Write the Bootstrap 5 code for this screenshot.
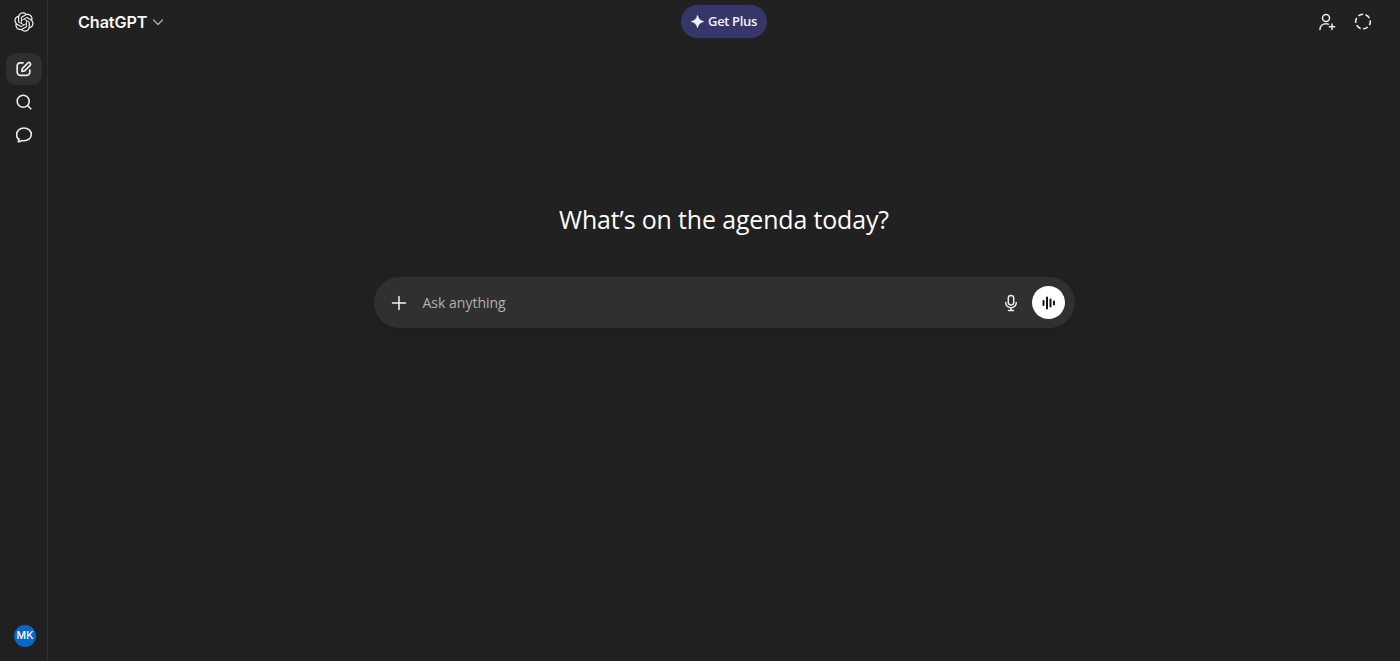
<!DOCTYPE html>
<html lang="en" data-bs-theme="dark">
<head>
<meta charset="utf-8">
<title>ChatGPT</title>
<link href="https://cdn.jsdelivr.net/npm/bootstrap@5.3.0/dist/css/bootstrap.min.css" rel="stylesheet">
<style>
html,body{height:100%;margin:0;overflow:hidden}
body{background:#212121;color:#fff;font-family:"Open Sans","Noto Sans",sans-serif}
.app-shell{height:661px}
.side-rail{width:48px;background:#202020;border-right:1px solid #2e2e2e;flex:none}
.rail-logo{height:44px}
.rail-item{width:36px;height:32px;border-radius:10px;color:#ececec}
.rail-item.is-active{background:#2f2f2f}
.rail-list{padding:9px 0 0 6px;gap:1px}
.avatar-dot{width:22px;height:22px;border-radius:50%;background:#0a66c8;color:#fff;font:500 10.5px/22px "Inter",sans-serif;text-align:center;margin:0 0 14px 14px}
.main-pane{min-width:0}
.top-strip{height:44px;padding:0 27px 0 30px}
.model-name{font:600 16.2px/1 "Inter",sans-serif;letter-spacing:-.1px;color:#f6f6f6}
.chevron-mark{margin-left:5px}
.plus-pill{position:absolute;left:633px;top:5px;width:86px;height:33px;border-radius:17px;background:#373669;color:#f3f3ff;font:600 13px/33px "Open Sans",sans-serif;letter-spacing:-.35px}
.hero-zone{padding-top:155px}
.hero-title{font:400 24.9px/40px "Open Sans",sans-serif;letter-spacing:-.12px;color:#fff;margin:0 0 38px}
.composer-box{width:701px;height:51px;border-radius:26px;background:#303030;box-shadow:0 4px 20px rgba(0,0,0,.08);padding:0 10px 0 16px}
.composer-text{font:400 14px/1 "Open Sans",sans-serif;color:#b0b0b0;margin-left:15px;padding-top:1px}
.voice-btn{width:33px;height:33px;border-radius:50%;background:#fff;margin-left:12px}
.top-icons{gap:16px}
</style>
</head>
<body>
<div class="app-shell d-flex">
  <aside class="side-rail d-flex flex-column">
    <div class="rail-logo d-flex align-items-center justify-content-center">
      <svg width="20" height="20" viewBox="0 0 41 41" fill="#ececec"><path d="M37.5324 16.8707C37.9808 15.5241 38.1363 14.0974 37.9886 12.6859C37.8409 11.2744 37.3934 9.91076 36.676 8.68622C35.6126 6.83404 33.9882 5.3676 32.0373 4.4985C30.0864 3.62941 27.9098 3.40259 25.8215 3.85078C24.8796 2.7893 23.7219 1.94125 22.4257 1.36341C21.1295 0.785575 19.7249 0.491269 18.3058 0.500197C16.1708 0.495044 14.0893 1.16803 12.3614 2.42214C10.6335 3.67624 9.34853 5.44666 8.6917 7.47815C7.30085 7.76286 5.98686 8.3414 4.8377 9.17505C3.68854 10.0087 2.73073 11.0782 2.02839 12.312C0.956464 14.1591 0.498905 16.2988 0.721698 18.4228C0.944492 20.5467 1.83612 22.5449 3.268 24.1293C2.81966 25.4759 2.66413 26.9026 2.81182 28.3141C2.95951 29.7256 3.40701 31.0892 4.12437 32.3138C5.18791 34.1659 6.8123 35.6322 8.76321 36.5013C10.7141 37.3704 12.8907 37.5973 14.9789 37.1492C15.9208 38.2107 17.0786 39.0587 18.3747 39.6366C19.6709 40.2144 21.0755 40.5087 22.4946 40.4998C24.6307 40.5054 26.7133 39.8321 28.4418 38.5772C30.1704 37.3223 31.4556 35.5506 32.1119 33.5179C33.5027 33.2332 34.8167 32.6547 35.9659 31.821C37.115 30.9874 38.0728 29.9178 38.7752 28.684C39.8458 26.8371 40.3023 24.6979 40.0789 22.5748C39.8556 20.4517 38.9639 18.4544 37.5324 16.8707ZM22.4978 37.8849C20.7443 37.8874 19.0459 37.2733 17.6994 36.1501C17.7601 36.117 17.8666 36.0586 17.936 36.0161L25.9004 31.4156C26.1003 31.3019 26.2663 31.137 26.3813 30.9378C26.4964 30.7386 26.5563 30.5124 26.5549 30.2825V19.0542L29.9213 20.998C29.9389 21.0068 29.9541 21.0198 29.9656 21.0359C29.977 21.052 29.9842 21.0707 29.9867 21.0902V30.3889C29.9842 32.375 29.1946 34.2791 27.7909 35.6841C26.3872 37.0892 24.4838 37.8806 22.4978 37.8849ZM6.39227 31.0064C5.51397 29.4888 5.19742 27.7107 5.49804 25.9832C5.55718 26.0187 5.66048 26.0818 5.73461 26.1244L13.699 30.7248C13.8975 30.8408 14.1233 30.902 14.3532 30.902C14.583 30.902 14.8088 30.8408 15.0073 30.7248L24.731 25.1103V28.9979C24.7321 29.0177 24.7283 29.0376 24.7199 29.0556C24.7115 29.0736 24.6988 29.0893 24.6829 29.1012L16.6317 33.7497C14.9096 34.7416 12.8643 35.0097 10.9447 34.4954C9.02506 33.9811 7.38785 32.7263 6.39227 31.0064ZM4.29707 13.6194C5.17156 12.0998 6.55279 10.9364 8.19885 10.3327C8.19885 10.4013 8.19491 10.5228 8.19491 10.6071V19.808C8.19351 20.0378 8.25334 20.2638 8.36823 20.4629C8.48312 20.6619 8.64893 20.8267 8.84863 20.9404L18.5723 26.5542L15.206 28.4979C15.1894 28.5089 15.1703 28.5155 15.1505 28.5173C15.1307 28.5191 15.1107 28.516 15.0924 28.5082L7.04046 23.8557C5.32135 22.8601 4.06716 21.2235 3.55289 19.3046C3.03862 17.3858 3.30624 15.3413 4.29707 13.6194ZM31.955 20.0556L22.2312 14.4411L25.5976 12.4981C25.6142 12.4872 25.6333 12.4805 25.6531 12.4787C25.6729 12.4769 25.6928 12.4801 25.7111 12.4879L33.7631 17.1364C34.9967 17.849 36.0017 18.8982 36.6606 20.1613C37.3194 21.4244 37.6047 22.849 37.4832 24.2684C37.3617 25.6878 36.8382 27.0432 35.9743 28.1759C35.1103 29.3086 33.9415 30.1717 32.6047 30.6641C32.6047 30.5947 32.6047 30.4733 32.6047 30.3889V21.188C32.6066 20.9586 32.5474 20.7328 32.4332 20.5338C32.319 20.3348 32.154 20.1698 31.955 20.0556ZM35.3055 15.0128C35.2464 14.9765 35.1431 14.9142 35.069 14.8717L27.1045 10.2712C26.906 10.1554 26.6803 10.0943 26.4504 10.0943C26.2206 10.0943 25.9948 10.1554 25.7963 10.2712L16.0726 15.8858V11.9982C16.0715 11.9783 16.0753 11.9585 16.0837 11.9405C16.0921 11.9225 16.1048 11.9068 16.1207 11.8949L24.1719 7.25025C25.4053 6.53903 26.8158 6.19376 28.2383 6.25482C29.6608 6.31589 31.0364 6.78077 32.2044 7.59508C33.3723 8.40939 34.2842 9.53945 34.8334 10.8531C35.3826 12.1667 35.5464 13.6095 35.3055 15.0128ZM14.2424 21.9419L10.8752 19.9981C10.8576 19.9893 10.8423 19.9763 10.8309 19.9602C10.8195 19.9441 10.8122 19.9254 10.8098 19.9058V10.6071C10.8107 9.18295 11.2173 7.78848 11.9819 6.58696C12.7466 5.38544 13.8377 4.42659 15.1275 3.82264C16.4173 3.21869 17.8524 2.99464 19.2649 3.1767C20.6775 3.35876 22.0089 3.93941 23.1034 4.85067C23.0427 4.88379 22.937 4.94215 22.8668 4.98473L14.9024 9.58517C14.7025 9.69878 14.5366 9.86356 14.4215 10.0626C14.3065 10.2616 14.2466 10.4877 14.2479 10.7175L14.2424 21.9419ZM16.071 17.9991L20.4018 15.4978L24.7325 17.9975V22.9985L20.4018 25.4983L16.071 22.9985V17.9991Z"/></svg>
    </div>
    <div class="rail-list d-flex flex-column">
      <div class="rail-item is-active d-flex align-items-center justify-content-center">
        <svg width="18" height="18" viewBox="0 0 18 18" fill="none" stroke="#ececec" stroke-width="1.7" stroke-linecap="round" stroke-linejoin="round"><path d="M8 2.800H5.200A3 3 0 0 0 2.200 5.800v6.500a3 3 0 0 0 3 3h6.600a3 3 0 0 0 3-3V10"/><path d="M7.300 8.600l5.500-5.600a1.600 1.600 0 0 1 2.300 2.300l-5.500 5.600-2.700.5z"/></svg>
      </div>
      <div class="rail-item d-flex align-items-center justify-content-center">
        <svg width="18" height="18" viewBox="0 0 18 18" fill="none" stroke="#ececec" stroke-width="1.600" stroke-linecap="round"><circle cx="8.200" cy="8.200" r="6"/><path d="M12.700 12.700l3.100 3.100"/></svg>
      </div>
      <div class="rail-item d-flex align-items-center justify-content-center">
        <svg width="18" height="18" viewBox="0 0 18 18" fill="none" stroke="#ececec" stroke-width="1.600" stroke-linejoin="round"><path d="M9 2c4.200 0 7.300 2.800 7.300 6.400s-3.100 6.400-7.300 6.400c-.8 0-1.500-.1-2.200-.3-1 .9-2.400 1.300-3.600 1.300.5-.8.900-1.700.9-2.700C2.700 12.800 1.700 10.800 1.700 8.400 1.700 4.800 4.800 2 9 2z"/></svg>
      </div>
    </div>
    <div class="avatar-dot mt-auto">MK</div>
  </aside>
  <main class="main-pane flex-grow-1 d-flex flex-column position-relative">
    <header class="top-strip d-flex align-items-center justify-content-between">
      <div class="d-flex align-items-center">
        <span class="model-name">ChatGPT</span>
        <svg class="chevron-mark" width="12" height="12" viewBox="0 0 12 12" fill="none" stroke="#b4b4b4" stroke-width="1.200" stroke-linecap="round" stroke-linejoin="round"><path d="M1.500 4l4.500 4.500L10.500 4"/></svg>
      </div>
      <div class="plus-pill d-flex align-items-center justify-content-center">
        <svg class="me-1" width="13" height="13" viewBox="0 0 14 14" fill="#f3f3ff"><path d="M7 .5c.9 3.600 2.600 5.400 6.500 6.500-3.900 1.100-5.600 2.900-6.500 6.500C6.100 9.900 4.400 8.100.5 7 4.400 5.900 6.100 4.100 7 .5z" stroke="#f3f3ff" stroke-width=".8" stroke-linejoin="round"/></svg>
        <span>Get Plus</span>
      </div>
      <div class="top-icons d-flex align-items-center">
        <svg width="20" height="20" viewBox="0 0 20 20" fill="none" stroke="#ececec" stroke-width="1.500" stroke-linecap="round"><circle cx="9" cy="6" r="3.500"/><path d="M3 17.500c0-3.700 2.600-5.800 6-5.800 .9 0 1.700.1 2.400.4"/><path d="M15 12v5.500M12.300 14.800h5.400"/></svg>
        <svg width="20" height="20" viewBox="0 0 20 20" fill="none" stroke="#ececec" stroke-width="1.600"><circle cx="10" cy="9.500" r="7.300" stroke-dasharray="5.200 2.450" stroke-dashoffset="1.500"/></svg>
      </div>
    </header>
    <section class="hero-zone d-flex flex-column align-items-center">
      <h1 class="hero-title">What’s on the agenda today?</h1>
      <div class="composer-box d-flex align-items-center">
        <svg width="18" height="18" viewBox="0 0 18 18" fill="none" stroke="#f2f2f2" stroke-width="1.500" stroke-linecap="round"><path d="M9 2.500v13M2.500 9h13"/></svg>
        <span class="composer-text flex-grow-1">Ask anything</span>
        <svg width="18" height="18" viewBox="0 0 18 18" fill="none" stroke="#ececec" stroke-width="1.500" stroke-linecap="round"><rect x="6.300" y="1.500" width="5.400" height="9.500" rx="2.700"/><path d="M3.700 8.500a5.300 5.300 0 0 0 10.600 0M9 13.800v2.700M6.500 16.500h5"/></svg>
        <div class="voice-btn d-flex align-items-center justify-content-center">
          <svg width="16" height="16" viewBox="0 0 16 16" stroke="#111" stroke-width="2" stroke-linecap="round"><path d="M3.500 6v4M7 2.500v11M10.500 4.500v7M14 6.500v3"/></svg>
        </div>
      </div>
    </section>
  </main>
</div>
<script src="https://cdn.jsdelivr.net/npm/bootstrap@5.3.0/dist/js/bootstrap.bundle.min.js"></script>
</body>
</html>
